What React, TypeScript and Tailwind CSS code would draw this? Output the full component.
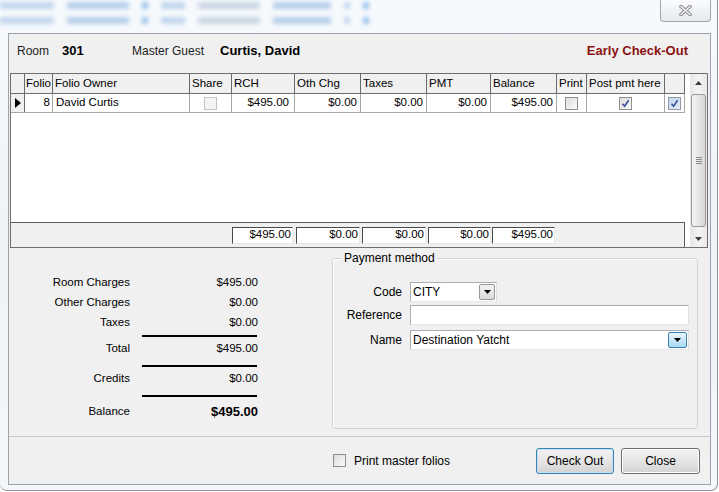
import React from "react";

const F = "font-['Liberation_Sans',Arial,sans-serif]";

const cols = [
  { label: "", w: "w-[14px]" },
  { label: "Folio", w: "w-[28px]" },
  { label: "Folio Owner", w: "w-[137px]" },
  { label: "Share", w: "w-[42px]" },
  { label: "RCH", w: "w-[63px]" },
  { label: "Oth Chg", w: "w-[66px]" },
  { label: "Taxes", w: "w-[66px]" },
  { label: "PMT", w: "w-[64px]" },
  { label: "Balance", w: "w-[66px]" },
  { label: "Print", w: "w-[30px]" },
  { label: "Post pmt here", w: "w-[78px]" },
  { label: "", w: "w-[20px]" },
];

const totals = [
  { v: "$495.00", w: "w-[63px]", box: "w-[61px]" },
  { v: "$0.00", w: "w-[66px]", box: "w-[64px]" },
  { v: "$0.00", w: "w-[66px]", box: "w-[64px]" },
  { v: "$0.00", w: "w-[64px]", box: "w-[63px]" },
  { v: "$495.00", w: "w-[66px]", box: "w-[63px]" },
];

const summary = [
  { label: "Room Charges", value: "$495.00" },
  { label: "Other Charges", value: "$0.00" },
  { label: "Taxes", value: "$0.00" },
];

// blurred window content seen through the glass frame
const glass = [
  { w: "w-[54px]", tone: "bg-[#bcd3ec]" },
  { w: "w-[62px]", tone: "bg-[#b0cbea]" },
  { w: "w-[6px]", tone: "bg-[#8dbbe8]" },
  { w: "w-[24px]", tone: "bg-[#bcd3ec]" },
  { w: "w-[62px]", tone: "bg-[#c6d3e2]" },
  { w: "w-[58px]", tone: "bg-[#b0cbea]" },
  { w: "w-[6px]", tone: "bg-[#bcd3ec]" },
  { w: "w-[6px]", tone: "bg-[#8dbbe8]" },
];

type CheckState = "disabled" | "off" | "on" | "onBlue";

const Check = ({ state }: { state: CheckState }) => {
  const box =
    state === "disabled"
      ? "border-[#c4c4c4] bg-[#f4f4f4]"
      : state === "onBlue"
        ? "border-[#8f9aa8] bg-gradient-to-br from-[#c3d6ee] to-[#e6eef8]"
        : "border-[#8e8f8f] bg-gradient-to-br from-[#dcdcdc] to-[#fbfbfb]";
  return (
    <div className={`flex h-[13px] w-[13px] items-center justify-center border ${box}`}>
      {(state === "on" || state === "onBlue") && (
        <svg width="9" height="9" viewBox="0 0 9 9">
          <path d="M1.5 4.8 L3.6 7.2 L7.6 1.2" fill="none" stroke="#3a4d9c" strokeWidth="1.6" />
        </svg>
      )}
    </div>
  );
};

const Arrow = ({ up = false, color = "#3d3d3d" }: { up?: boolean; color?: string }) => (
  <svg width="7" height="4" viewBox="0 0 7 4">
    <polygon points={up ? "0,4 7,4 3.5,0" : "0,0 7,0 3.5,4"} fill={color} />
  </svg>
);

const GlassRow = () => (
  <div className="flex gap-[13px]">
    {glass.map((g, i) => (
      <div key={i} className={`h-[7px] ${g.w} ${g.tone} blur-[2px] opacity-90`} />
    ))}
  </div>
);

const Button = ({ label, focused = false, w }: { label: string; focused?: boolean; w: string }) => (
  <button
    className={`flex h-[26px] ${w} items-center justify-center rounded-[3px] border bg-gradient-to-b from-[#f2f2f2] via-[#e6e6e6] to-[#d2d2d2] text-[12px] text-black ${
      focused ? "border-[#3c7fb1] shadow-[inset_0_0_0_1px_#bfe3f7]" : "border-[#707070] shadow-[inset_0_0_0_1px_#fcfcfc]"
    }`}
  >
    {label}
  </button>
);

export default function App() {
  return (
    <div className={`h-[492px] w-[719px] overflow-hidden bg-white text-black ${F}`}>
      <div className="flex h-[491px] w-[718px] flex-col rounded-b-[7px] border-r border-b border-[#8d949c] bg-gradient-to-b from-[#f7fafd] via-[#eef3f8] to-[#f4f7fa]">
        {/* glass title strip */}
        <div className="flex h-[33px] shrink-0">
          <div className="flex flex-1 flex-col gap-[8px] pt-[2px]">
            <GlassRow />
            <GlassRow />
          </div>
          <div className="mr-[6px] flex h-[22px] w-[51px] items-center justify-center rounded-b-[4px] border border-t-0 border-[#a2a8b0] bg-gradient-to-b from-[#fbfcfd] to-[#e4e9ee]">
            <svg width="13" height="11" viewBox="0 0 13 11">
              <path d="M2 1.5 L11 9.5 M11 1.5 L2 9.5" stroke="#8a8c8f" strokeWidth="3.6" strokeLinecap="round" />
              <path d="M2 1.5 L11 9.5 M11 1.5 L2 9.5" stroke="#f4f4f4" strokeWidth="1.6" strokeLinecap="round" />
            </svg>
          </div>
        </div>

        {/* client area */}
        <div className="ml-[8px] flex h-[452px] w-[703px] flex-col border border-[#9ba3ac] bg-[#f0f0f0]">
          {/* header */}
          <div className="flex h-[39px] shrink-0 items-center pl-[8px] pr-[22px] pb-[6px]">
            <span className="w-[45px] text-[12px] text-[#1e1e1e]">Room</span>
            <span className="w-[70px] text-[13px] font-bold">301</span>
            <span className="w-[88px] text-[12px] text-[#1e1e1e]">Master Guest</span>
            <span className="flex-1 text-[13px] font-bold">Curtis, David</span>
            <span className="text-[13px] font-bold text-[#8b1111]">Early Check-Out</span>
          </div>

          {/* grid */}
          <div className="ml-[1px] flex h-[175px] w-[698px] shrink-0 border border-[#6e6e6e] bg-white">
            <div className="flex w-[679px] flex-col text-[11.5px]">
              <div className="flex h-[20px] w-[674px] shrink-0 border-b border-[#6b6b6b] bg-[#f0f0f0]">
                {cols.map((c, i) => (
                  <div
                    key={i}
                    className={`flex h-full shrink-0 items-center overflow-hidden whitespace-nowrap border-r border-[#6b6b6b] ${i === 1 ? "px-[1px]" : "px-[2px]"} ${c.w}`}
                  >
                    {c.label}
                  </div>
                ))}
              </div>
              <div className="flex h-[19px] w-[674px] shrink-0 border-b border-[#a6a6a6]">
                <div className="flex w-[14px] items-center justify-center border-r border-[#6b6b6b] bg-[#f0f0f0]">
                  <svg width="6" height="10" viewBox="0 0 6 10">
                    <polygon points="0,0 6,5 0,10" fill="#000" />
                  </svg>
                </div>
                <div className="flex w-[28px] items-center justify-end border-r border-[#a6a6a6] pr-[2px]">8</div>
                <div className="flex w-[137px] items-center border-r border-[#a6a6a6] pl-[3px]">David Curtis</div>
                <div className="flex w-[42px] items-center justify-center border-r border-[#a6a6a6]">
                  <Check state="disabled" />
                </div>
                <div className="flex w-[63px] items-center justify-end border-r border-[#a6a6a6] pr-[5px]">$495.00</div>
                <div className="flex w-[66px] items-center justify-end border-r border-[#a6a6a6] pr-[3px]">$0.00</div>
                <div className="flex w-[66px] items-center justify-end border-r border-[#a6a6a6] pr-[3px]">$0.00</div>
                <div className="flex w-[64px] items-center justify-end border-r border-[#a6a6a6] pr-[3px]">$0.00</div>
                <div className="flex w-[66px] items-center justify-end border-r border-[#a6a6a6] pr-[3px]">$495.00</div>
                <div className="flex w-[30px] items-center justify-center border-r border-[#a6a6a6]">
                  <Check state="off" />
                </div>
                <div className="flex w-[78px] items-center justify-center border-r border-[#a6a6a6]">
                  <Check state="on" />
                </div>
                <div className="flex w-[20px] items-center justify-center border-r border-[#a6a6a6]">
                  <Check state="onBlue" />
                </div>
              </div>
              <div className="flex-1" />
              <div className="flex h-[25px] w-[674px] shrink-0 items-center border-t border-r border-[#5e5e5e] bg-[#f0f0f0]">
                <div className="w-[221px] shrink-0" />
                {totals.map((t, i) => (
                  <div key={i} className={`flex shrink-0 ${t.w} ${i === 0 ? "" : "pl-[1px]"}`}>
                    <div
                      className={`flex h-[17px] ${t.box} items-center justify-end border-t border-l border-[#4a4a4a] border-b border-r border-b-[#e8e8e8] border-r-[#e8e8e8] bg-white pr-[1px]`}
                    >
                      {t.v}
                    </div>
                  </div>
                ))}
              </div>
            </div>
            {/* scrollbar */}
            <div className="flex w-[17px] flex-col bg-gradient-to-r from-[#e6e6e6] via-[#f3f3f3] to-[#e9e9e9]">
              <div className="flex h-[17px] items-center justify-center">
                <Arrow up />
              </div>
              <div className="flex flex-1 px-[1px] py-[3px]">
                <div className="flex flex-1 items-center justify-center rounded-[3px] border border-[#9a9a9a] bg-gradient-to-r from-[#f5f5f5] via-[#e7e7e7] to-[#d6d6d6]">
                  <div className="flex flex-col gap-[1px]">
                    <div className="h-[1px] w-[6px] bg-[#8a8a8a]" />
                    <div className="h-[1px] w-[6px] bg-[#8a8a8a]" />
                    <div className="h-[1px] w-[6px] bg-[#8a8a8a]" />
                    <div className="h-[1px] w-[6px] bg-[#8a8a8a]" />
                  </div>
                </div>
              </div>
              <div className="flex h-[17px] items-center justify-center">
                <Arrow />
              </div>
            </div>
          </div>

          {/* middle */}
          <div className="flex h-[188px] shrink-0">
            <div className="flex w-[323px] shrink-0 flex-col pt-[25px] text-[11.5px]">
              {summary.map((s) => (
                <div key={s.label} className="flex h-[20px] items-center">
                  <span className="w-[121px] text-right">{s.label}</span>
                  <span className="ml-[11px] w-[117px] text-right">{s.value}</span>
                </div>
              ))}
              <div className="ml-[133px] mt-[2px] h-[2px] w-[115px] bg-black" />
              <div className="mt-[2px] flex h-[20px] items-center">
                <span className="w-[121px] text-right">Total</span>
                <span className="ml-[11px] w-[117px] text-right">$495.00</span>
              </div>
              <div className="ml-[133px] mt-[6px] h-[2px] w-[115px] bg-black" />
              <div className="mt-[2px] flex h-[20px] items-center">
                <span className="w-[121px] text-right">Credits</span>
                <span className="ml-[11px] w-[117px] text-right">$0.00</span>
              </div>
              <div className="ml-[133px] mt-[6px] h-[2px] w-[115px] bg-black" />
              <div className="mt-[5px] flex h-[20px] items-center">
                <span className="w-[121px] text-right">Balance</span>
                <span className="ml-[11px] w-[117px] text-right text-[13px] font-bold">$495.00</span>
              </div>
            </div>

            <div className="relative mt-[10px] h-[171px] w-[366px] rounded-[3px] border border-[#cdd5dc] shadow-[inset_1px_1px_0_#fff] pt-[23px] pr-[8px] text-[12px]">
              <span className="absolute -top-[8px] left-[9px] bg-[#f0f0f0] px-[2px] leading-[14px]">Payment method</span>
              <div className="flex h-[20px] items-center">
                <span className="w-[69px] text-right">Code</span>
                <div className="ml-[8px] flex h-[20px] w-[87px] items-center border border-[#abadb3] border-b-[#e3e9ef] border-r-[#dbdfe6] bg-white pl-[2px] pr-[1px]">
                  <span className="flex-1">CITY</span>
                  <div className="flex h-[16px] w-[16px] items-center justify-center rounded-[2px] border border-[#9a9a9a] bg-gradient-to-b from-[#f4f4f4] to-[#d9d9d9]">
                    <Arrow color="#000" />
                  </div>
                </div>
              </div>
              <div className="mt-[3px] flex h-[20px] items-center">
                <span className="w-[69px] text-right">Reference</span>
                <div className="ml-[8px] h-[20px] flex-1 border border-[#abadb3] border-b-[#e3e9ef] border-r-[#dbdfe6] bg-white" />
              </div>
              <div className="mt-[5px] flex h-[20px] items-center">
                <span className="w-[69px] text-right">Name</span>
                <div className="ml-[8px] flex h-[20px] flex-1 items-center border border-[#abadb3] border-b-[#e3e9ef] border-r-[#dbdfe6] bg-white pl-[2px] pr-[1px]">
                  <span className="flex-1">Destination Yatcht</span>
                  <div className="flex h-[16px] w-[19px] items-center justify-center rounded-[2px] border border-[#3c7fb1] bg-gradient-to-b from-[#eaf6fd] to-[#a7d9f5]">
                    <Arrow color="#000" />
                  </div>
                </div>
              </div>
            </div>
          </div>

          <div className="h-[1px] shrink-0 bg-[#c9c9c9]" />

          {/* bottom bar */}
          <div className="flex h-[47px] shrink-0 items-center pr-[10px]">
            <div className="ml-[324px] flex items-center gap-[8px] text-[12px]">
              <Check state="off" />
              <span>Print master folios</span>
            </div>
            <div className="flex-1" />
            <Button label="Check Out" focused w="w-[78px]" />
            <div className="w-[7px]" />
            <Button label="Close" w="w-[79px]" />
          </div>
        </div>
      </div>
    </div>
  );
}
